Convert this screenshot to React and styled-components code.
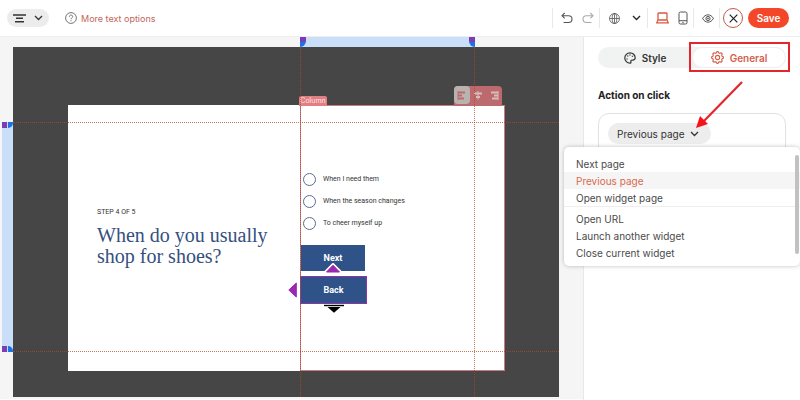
import {useState} from "react"
import styled, {createGlobalStyle} from "styled-components"

const GlobalStyle = createGlobalStyle`
  * {
    box-sizing: border-box;
  }
  body {
    margin: 0;
    background: #fff;
    color: #333;
    font-family: Inter, "Open Sans", sans-serif;
    font-size: 10px;
  }
  button,
  input,
  select {
    margin: 0;
    padding: 0;
    border: 0;
    background: none;
    color: inherit;
    font: inherit;
  }
  svg {
    display: block;
    fill: none;
    stroke: currentColor;
    flex: none;
  }
`

const answers = ["When I need them", "When the season changes", "To cheer myself up"]
const pageActions = ["Next page", "Previous page", "Open widget page"]
const widgetActions = ["Open URL", "Launch another widget", "Close current widget"]

const Chevron = () => (
  <svg width="9" height="6" viewBox="0 0 9 6" strokeWidth="1.3">
    <path d="M1 1l3.5 3.5L8 1" />
  </svg>
)

const alignPaths = {
  left: "M1 2.5h7M1 5.5h4M1 8.5h6",
  center: "M1 3.5h8M3 7h4",
  right: "M2 2.5h7M5 5.5h4M3 8.5h6",
}

const AlignIcon = ({side}) => (
  <svg width="10" height="10" viewBox="0 0 10 10" strokeWidth="1.8">
    {side === "left" && <path d="M1 1v9" strokeWidth="1" />}
    {side === "center" && <path d="M5 1v8.5" strokeWidth="1" />}
    {side === "right" && <path d="M9 1v9" strokeWidth="1" />}
    <path d={alignPaths[side]} />
  </svg>
)

const Toolbar = () => (
  <Header>
    <TextAlign type="button" aria-label="Text alignment">
      <svg width="13" height="9" viewBox="0 0 13 9" strokeWidth="1.4">
        <path d="M0 1h13M3 4.3h7M2 7.7h9" />
      </svg>
      <Chevron />
    </TextAlign>
    <Help href="#help">
      <svg width="12" height="12" viewBox="0 0 12 12" strokeWidth=".9">
        <circle cx="6" cy="6" r="5.4" />
        <path d="M4.3 4.8C4.3 2.5 7.7 2.6 7.7 4.6 7.7 5.9 6 5.8 6 7.2M6 8.2v1" />
      </svg>
      More text options
    </Help>
    <Tools>
      <Group $width={47}>
        <IconButton type="button" aria-label="Undo">
          <svg width="12" height="12" viewBox="0 0 12 12" strokeWidth="1.1">
            <path d="M3.7 1L1 3.7l2.7 2.7M1 3.7h6.6a3.4 3.4 0 0 1 0 6.8H2.6" />
          </svg>
        </IconButton>
        <IconButton type="button" aria-label="Redo" $color="#aaa">
          <svg width="12" height="12" viewBox="0 0 12 12" strokeWidth="1.1">
            <path d="M8.3 1L11 3.7 8.3 6.4M11 3.7H4.4a3.4 3.4 0 0 0 0 6.8h5" />
          </svg>
        </IconButton>
      </Group>
      <Group $width={48}>
        <IconButton type="button" aria-label="Language">
          <svg width="11" height="11" viewBox="0 0 11 11" strokeWidth=".8">
            <circle cx="5.5" cy="5.5" r="5" />
            <ellipse cx="5.5" cy="5.5" rx="2.3" ry="5" />
            <path d="M5.5.5v10M.5 5.5h10" />
          </svg>
        </IconButton>
        <IconButton type="button" aria-label="Choose language" $color="#222">
          <Chevron />
        </IconButton>
      </Group>
      <Group $width={46}>
        <IconButton type="button" aria-label="Desktop" $color="#d9583f">
          <svg width="13" height="12" viewBox="0 0 13 12" strokeWidth="1.3">
            <rect x="2" y="1" width="9" height="7" rx=".7" />
            <path d="M2 8L.8 10.8h11.4L11 8" />
          </svg>
        </IconButton>
        <IconButton type="button" aria-label="Mobile">
          <svg width="10" height="14" viewBox="0 0 10 14" strokeWidth="1">
            <rect x="1" y="1" width="8" height="12" rx="1.5" />
            <path d="M1 9.7h8M4.3 11.4h1.4" />
          </svg>
        </IconButton>
      </Group>
      <Group $width={26}>
        <IconButton type="button" aria-label="Preview">
          <svg width="12" height="9" viewBox="0 0 12 9" strokeWidth="1">
            <path d="M.6 4.5C3.2-.4 8.8-.4 11.4 4.5 8.8 9.4 3.2 9.4.6 4.5z" />
            <circle cx="6" cy="4.5" r="2.1" />
            <circle cx="6" cy="4.5" r=".6" />
          </svg>
        </IconButton>
      </Group>
      <Group $width={81}>
        <Close type="button" aria-label="Close">
          <svg width="9" height="9" viewBox="0 0 9 9" strokeWidth="1.2">
            <path d="M.7.7l7.6 7.6M8.3.7L.7 8.3" />
          </svg>
        </Close>
        <Save type="button">Save</Save>
      </Group>
    </Tools>
  </Header>
)

const Canvas = () => (
  <Workspace>
    <TopRuler>
      <TopRange>
        <TopHandle />
        <TopHandle $end />
      </TopRange>
    </TopRuler>
    <SideRuler>
      <SideRange>
        <SideHandle />
        <SideHandle />
      </SideRange>
    </SideRuler>
    <Stage>
      <Page>
        <Intro>
          <Step>STEP 4 OF 5</Step>
          <Question>
            When do you usually
            <br />
            shop for shoes?
          </Question>
        </Intro>
        <Column>
          <ColumnTag>Column</ColumnTag>
          <ColumnTools>
            <AlignButton type="button" aria-label="Align left" $active>
              <AlignIcon side="left" />
            </AlignButton>
            <AlignButton type="button" aria-label="Align center">
              <AlignIcon side="center" />
            </AlignButton>
            <AlignButton type="button" aria-label="Align right">
              <AlignIcon side="right" />
            </AlignButton>
          </ColumnTools>
          {answers.map((answer) => (
            <Answer key={answer}>
              <input type="radio" name="answer" />
              {answer}
            </Answer>
          ))}
          <PageButton type="button">Next</PageButton>
          <Selected>
            <PageButton type="button" $selected>
              Back
            </PageButton>
            <UpMark width="18" height="12" viewBox="0 0 18 12">
              <path d="M9 1.5L16 8.5H2z" fill="#9c27b0" stroke="#fff" strokeWidth="3" strokeLinejoin="round" />
              <path d="M9 2.2L15.5 9h-13z" fill="#9c27b0" stroke="#9c27b0" strokeLinejoin="round" />
            </UpMark>
            <LeftMark width="9" height="16" viewBox="0 0 9 16">
              <path d="M.8 8L8.3 1v14z" fill="#9c27b0" stroke="#9c27b0" strokeLinejoin="round" />
            </LeftMark>
            <DownMark width="20" height="9" viewBox="0 0 20 9">
              <path d="M0 1.5h20" stroke="#000" strokeWidth="1.4" />
              <path d="M3.5 3h13L10 8.8z" fill="#000" stroke="none" />
            </DownMark>
          </Selected>
        </Column>
      </Page>
      <RowGuide $y="75px" />
      <RowGuide $y="304px" />
      <ColumnGuide $x="287px" />
      <ColumnGuide $x="461px" />
    </Stage>
  </Workspace>
)

const ActionPicker = () => {
  const [action, setAction] = useState("Previous page")
  const renderItem = (item) => (
    <MenuItem
      key={item}
      type="button"
      role="option"
      aria-selected={item === action}
      $active={item === action}
      onClick={() => setAction(item)}
    >
      {item}
    </MenuItem>
  )

  return (
    <Picker>
      <Label htmlFor="action">Action on click</Label>
      <ActionBox>
        <SelectPill>
          <select id="action" value={action} onChange={(e) => setAction(e.target.value)}>
            {[...pageActions, ...widgetActions].map((item) => (
              <option key={item}>{item}</option>
            ))}
          </select>
          <Chevron />
        </SelectPill>
      </ActionBox>
      <Menu role="listbox" aria-label="Actions">
        <MenuGroup>{pageActions.map(renderItem)}</MenuGroup>
        <MenuGroup>{widgetActions.map(renderItem)}</MenuGroup>
        <ScrollThumb />
      </Menu>
      <Arrow width="52" height="54" viewBox="0 0 52 54">
        <path d="M49 3L11 42" stroke="#e3262b" strokeWidth="2.2" />
        <path d="M3 49L7 37l8 8z" fill="#f5141a" stroke="none" />
      </Arrow>
    </Picker>
  )
}

const App = () => (
  <Shell>
    <GlobalStyle />
    <Toolbar />
    <Main>
      <Canvas />
      <Sidebar>
        <Tabs>
          <Tab type="button">
            <svg width="12" height="12" viewBox="0 0 12 12" strokeWidth="1.2">
              <path d="M6 .8a5.2 5.2 0 1 0 0 10.4c1.6 0 .6-1.8 1-2.6.6-1.2 4.2.4 4.2-2.6C11.2 3 8.9.8 6 .8z" />
              <path d="M3 6.5v1M3.7 3.5v1M6 2.5v1M8.5 3.7v1" strokeWidth="1.4" />
            </svg>
            Style
          </Tab>
          <Tab type="button" $active>
            <svg width="13" height="13" viewBox="0 0 14 14" strokeWidth="1.2" strokeLinejoin="round">
              <path d="M5.8 2L6.300.7h1.400L8.200 2l1.300.5 1.300-.6 1.300 1.300-.6 1.300.5 1.300 1.300.5v1.400l-1.300.5-.5 1.300.6 1.300-1.300 1.300-1.300-.6-1.300.5-.5 1.300H6.300L5.800 12l-1.300-.5-1.300.6-1.300-1.300.6-1.300L2 8.200.7 7.700V6.300L2 5.800l.5-1.300-.6-1.300 1.300-1.300 1.300.6z" />
              <circle cx="7" cy="7" r="2.3" />
            </svg>
            General
          </Tab>
          <Highlight />
        </Tabs>
        <ActionPicker />
      </Sidebar>
    </Main>
  </Shell>
)

const Shell = styled.div`
  min-height: 100vh;
  display: flex;
  flex-direction: column;
`

const Header = styled.header`
  height: 37px;
  padding-left: 7px;
  display: flex;
  align-items: center;
  border-bottom: 1px solid #eee;
`

const TextAlign = styled.button`
  width: 42px;
  height: 18px;
  padding: 0 6px;
  display: flex;
  align-items: center;
  justify-content: space-between;
  border-radius: 9px;
  background: #ececec;
`

const Help = styled.a`
  margin-left: 16px;
  display: flex;
  align-items: center;
  gap: 4px;
  color: #c0675a;
  font-size: 9px;
  text-decoration: none;
  svg {
    color: #666;
  }
`

const Tools = styled.div`
  margin-left: auto;
  display: flex;
`

const Group = styled.div`
  width: ${(p) => p.$width}px;
  height: 20px;
  padding-left: 3px;
  display: flex;
  align-items: center;
  justify-content: space-around;
  border-left: 1px solid #e8e8e8;
  &:last-child {
    padding-right: 11px;
    justify-content: space-between;
  }
`

const IconButton = styled.button`
  color: ${(p) => p.$color || "#555"};
`

const Close = styled.button`
  width: 20px;
  height: 20px;
  display: grid;
  place-items: center;
  border: 1px solid #c45a48;
  border-radius: 50%;
  color: #222;
`

const Save = styled.button`
  width: 41px;
  height: 20px;
  border-radius: 10px;
  background: #f4472a;
  color: #fff;
  font-weight: 600;
`

const Main = styled.main`
  flex: 1;
  display: flex;
`

const Workspace = styled.section`
  flex: 1;
  padding-bottom: 2px;
  display: grid;
  grid-template-columns: 13px 1fr 24px;
  grid-template-rows: 10px 1fr;
  background: #f5f5f5;
  border-bottom: 1px solid #fff;
`

const TopRuler = styled.div`
  grid-column: 2;
  grid-row: 1;
  padding-left: 287px;
`

const TopRange = styled.div`
  width: 175px;
  height: 10px;
  display: flex;
  justify-content: space-between;
  background: #c9def8;
`

const TopHandle = styled.div`
  width: 6px;
  height: 10px;
  background: linear-gradient(#7b3db5 50%, #1a73e8 50%);
  border-radius: ${(p) => (p.$end ? "0 0 0 6px" : "0 0 6px 0")};
`

const SideRuler = styled.div`
  grid-column: 1;
  grid-row: 2;
  padding: 75px 0 0 2px;
`

const SideRange = styled.div`
  height: 230px;
  display: flex;
  flex-direction: column;
  justify-content: space-between;
  background: #c9def8;
`

const SideHandle = styled.div`
  height: 6px;
  display: flex;
  gap: 1px;
  &::before {
    content: "";
    width: 5px;
    background: #7b3db5;
  }
  &::after {
    content: "";
    flex: 1;
    background: #1a73e8;
    border-radius: 0 0 5px 0;
  }
  &:last-child::after {
    border-radius: 0 5px 0 0;
  }
`

const Stage = styled.div`
  grid-column: 2;
  grid-row: 2;
  position: relative;
  padding: 58px 54px 26px 55px;
  display: flex;
  background: #464646;
`

const Page = styled.div`
  flex: 1;
  display: grid;
  grid-template-columns: 232px 1fr;
  background: #fff;
`

const Intro = styled.div`
  padding: 0 0 2px 29px;
  display: flex;
  flex-direction: column;
  justify-content: center;
  gap: 8px;
`

const Step = styled.p`
  margin: 0;
  font: 7px/10px Roboto, sans-serif;
`

const Question = styled.h1`
  margin: 0;
  color: #34507f;
  font: 20px/21px "Liberation Serif", serif;
`

const Column = styled.div`
  position: relative;
  padding-bottom: 4px;
  display: flex;
  flex-direction: column;
  align-items: flex-start;
  justify-content: center;
  border: 1px solid #c97b80;
  font-family: Roboto, sans-serif;
`

const ColumnTag = styled.span`
  position: absolute;
  left: -2px;
  bottom: 100%;
  width: 28px;
  height: 10px;
  border-radius: 2px 2px 0 0;
  background: #e17f83;
  color: #fbe3e3;
  font: 7px/10px Inter, sans-serif;
  text-align: center;
`

const ColumnTools = styled.div`
  position: absolute;
  right: 2px;
  bottom: 100%;
  height: 20px;
  display: flex;
  align-items: flex-start;
  border-radius: 4px 4px 0 0;
  background: #bd6a6e;
`

const AlignButton = styled.button`
  width: 16px;
  height: 18px;
  display: grid;
  place-items: center;
  border-radius: 4px;
  background: ${(p) => (p.$active ? "#b9b3b0" : "none")};
  color: ${(p) => (p.$active ? "#bd6a6e" : "#d8bcbb")};
`

const Answer = styled.label`
  height: 22px;
  padding-left: 2px;
  display: flex;
  align-items: center;
  gap: 7px;
  font-size: 7px;
  input {
    appearance: none;
    width: 13px;
    height: 13px;
    border: 1px solid #5a6c92;
    border-radius: 50%;
  }
`

const PageButton = styled.button`
  width: ${(p) => (p.$selected ? 67 : 64)}px;
  height: ${(p) => (p.$selected ? 28 : 26)}px;
  margin-top: ${(p) => (p.$selected ? 0 : 11)}px;
  border: ${(p) => (p.$selected ? "1px solid #8d35a8" : "0")};
  background: #2f5288;
  color: #fff;
  font-size: 9px;
  font-weight: 700;
`

const Selected = styled.div`
  position: relative;
  margin: 5px 0 0 -1px;
  display: flex;
`

const UpMark = styled.svg`
  position: absolute;
  top: -13px;
  left: 24px;
`

const LeftMark = styled.svg`
  position: absolute;
  top: 6px;
  left: -12px;
`

const DownMark = styled.svg`
  position: absolute;
  top: 28px;
  left: 24px;
`

const RowGuide = styled.div`
  position: absolute;
  top: ${(p) => p.$y};
  left: 0;
  right: 0;
  border-top: 1px dotted rgba(180, 72, 40, 0.75);
`

const ColumnGuide = styled.div`
  position: absolute;
  left: ${(p) => p.$x};
  top: 0;
  bottom: 0;
  border-left: 1px dotted rgba(180, 72, 40, 0.75);
`

const Sidebar = styled.aside`
  width: 217px;
  padding: 10px 14px 0;
  border-left: 1px solid #e8e8e8;
`

const Tabs = styled.div`
  position: relative;
  height: 21px;
  display: grid;
  grid-template-columns: 1fr 1fr;
  border-radius: 11px;
  background: #f1f3f3;
`

const Tab = styled.button`
  display: flex;
  align-items: center;
  justify-content: center;
  gap: 6px;
  border: ${(p) => (p.$active ? "1px solid #eee" : "0")};
  border-radius: 11px;
  background: ${(p) => (p.$active ? "#fff" : "none")};
  color: ${(p) => (p.$active ? "#d4604b" : "#333")};
  font-weight: 600;
`

const Highlight = styled.div`
  position: absolute;
  top: -5px;
  right: -4px;
  width: 101px;
  height: 30px;
  border: 2px solid #e3262b;
`

const Picker = styled.div`
  position: relative;
  margin-top: 20px;
`

const Label = styled.label`
  display: block;
  color: #222;
  font-weight: 700;
  line-height: 15px;
`

const ActionBox = styled.div`
  height: 60px;
  margin-top: 10px;
  padding: 9px;
  border: 1px solid #e2e2e2;
  border-radius: 11px;
`

const SelectPill = styled.div`
  width: 103px;
  height: 21px;
  padding: 0 12px 0 9px;
  display: flex;
  align-items: center;
  border-radius: 11px;
  background: #ededed;
  select {
    flex: 1;
    min-width: 0;
    appearance: none;
    outline: 0;
  }
`

const Menu = styled.div`
  position: absolute;
  top: 59px;
  left: -34px;
  right: -14px;
  padding: 8px 0 5px;
  border-radius: 5px;
  background: #fff;
  box-shadow: 0 0 4px rgba(0, 0, 0, 0.25);
`

const MenuGroup = styled.div`
  & + & {
    padding-top: 3px;
    border-top: 1px solid #eee;
  }
`

const MenuItem = styled.button`
  width: 100%;
  height: 17px;
  padding-left: 12px;
  display: block;
  background: ${(p) => (p.$active ? "#f5f5f5" : "none")};
  color: ${(p) => (p.$active ? "#d9694f" : "#4a4a4a")};
  text-align: left;
`

const ScrollThumb = styled.div`
  position: absolute;
  top: 8px;
  right: 1px;
  width: 4px;
  height: 99px;
  border-radius: 2px;
  background: #c1c1c1;
`

const Arrow = styled.svg`
  position: absolute;
  top: -9px;
  left: 95px;
`

export default App
